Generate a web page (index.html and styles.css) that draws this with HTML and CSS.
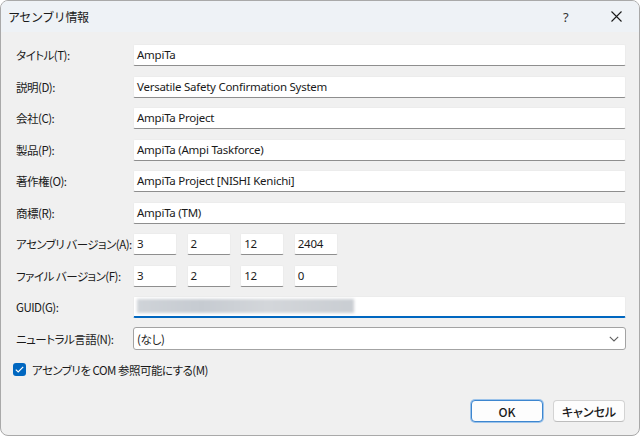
FILE: index.html
```html
<!DOCTYPE html>
<html lang="ja">
<head>
<meta charset="utf-8">
<title>アセンブリ情報</title>
<link rel="stylesheet" href="styles.css">
</head>
<body>
<div class="window">
  <div class="titlebar">
    <span class="title">アセンブリ情報</span>
    <span class="help">?</span>
    <span class="close">
      <svg width="11" height="11" viewBox="0 0 11 11"><path d="M0.5 0.5 L10.5 10.5 M10.5 0.5 L0.5 10.5" stroke="#1a1a1a" stroke-width="1.1" fill="none"/></svg>
    </span>
  </div>
  <div class="content">
    <div class="form">
      <label class="lbl">タイトル(T):</label>
      <div class="input">AmpiTa</div>
      <label class="lbl">説明(D):</label>
      <div class="input">Versatile Safety Confirmation System</div>
      <label class="lbl">会社(C):</label>
      <div class="input">AmpiTa Project</div>
      <label class="lbl">製品(P):</label>
      <div class="input">AmpiTa (Ampi Taskforce)</div>
      <label class="lbl">著作権(O):</label>
      <div class="input">AmpiTa Project [NISHI Kenichi]</div>
      <label class="lbl">商標(R):</label>
      <div class="input">AmpiTa (TM)</div>
      <label class="lbl">アセンブリ バージョン(A):</label>
      <div class="versions">
        <div class="input small">3</div>
        <div class="input small">2</div>
        <div class="input small">12</div>
        <div class="input small">2404</div>
      </div>
      <label class="lbl">ファイル バージョン(F):</label>
      <div class="versions">
        <div class="input small">3</div>
        <div class="input small">2</div>
        <div class="input small">12</div>
        <div class="input small">0</div>
      </div>
      <label class="lbl">GUID(G):</label>
      <div class="input guid"><div class="blur"></div></div>
      <label class="lbl">ニュートラル言語(N):</label>
      <div class="combo">
        <span>(なし)</span>
        <svg class="chev" width="10" height="6" viewBox="0 0 10 6"><path d="M0.8 0.8 L5 5 L9.2 0.8" stroke="#606060" stroke-width="1.1" fill="none"/></svg>
      </div>
    </div>
    <div class="check-row">
      <span class="checkbox">
        <svg width="9" height="7" viewBox="0 0 9 7"><path d="M0.8 3.6 L3.2 6 L8.2 0.9" stroke="#ffffff" stroke-width="1.2" fill="none"/></svg>
      </span>
      <span class="check-label">アセンブリを COM 参照可能にする(M)</span>
    </div>
    <div class="buttons">
      <button class="btn default">OK</button>
      <button class="btn">キャンセル</button>
    </div>
  </div>
</div>
</body>
</html>
```

FILE: styles.css
```css
* { box-sizing: border-box; }
html, body {
  margin: 0;
  padding: 0;
  background: #ffffff;
}
body {
  font-family: "Noto Sans", "Noto Sans CJK JP", sans-serif;
  font-size: 12px;
  color: #1a1a1a;
}
.window {
  width: 640px;
  height: 436px;
  border: 1px solid #a9a9a9;
  border-radius: 8px;
  overflow: hidden;
  background: #f0f0f0;
  display: flex;
  flex-direction: column;
}
.titlebar {
  height: 31px;
  flex: none;
  background: #eef2f6;
  display: flex;
  align-items: center;
  padding-left: 7px;
  font-family: "Noto Sans CJK JP", sans-serif;
}
.title {
  flex: 1;
  font-size: 12px;
  color: #1a1a1a;
  letter-spacing: -0.4px;
}
.help {
  width: 12px;
  margin-right: 36px;
  font-family: "Noto Sans", sans-serif;
  font-size: 13px;
  color: #333;
}
.close {
  width: 11px;
  height: 11px;
  margin-right: 17px;
  display: flex;
}
.content {
  flex: 1;
  padding: 12px 13px 0 15px;
  display: flex;
  flex-direction: column;
}
.form {
  display: grid;
  grid-template-columns: 117px 1fr;
  grid-auto-rows: 22px;
  row-gap: 9.5px;
  align-items: center;
}
.lbl {
  font-family: "Noto Sans CJK JP", sans-serif;
  font-size: 11.5px;
  color: #1a1a1a;
  white-space: nowrap;
  font-feature-settings: "palt";
  letter-spacing: -0.5px;
}
.input {
  height: 22px;
  background: #ffffff;
  border: 1px solid #ececec;
  border-bottom: 1px solid #8e8e8e;
  border-radius: 2px;
  padding: 0 3px;
  line-height: 20px;
  font-family: "Noto Sans", "Noto Sans CJK JP", sans-serif;
  font-size: 11.5px;
  letter-spacing: -0.25px;
  white-space: nowrap;
  overflow: hidden;
}
.versions {
  display: flex;
  gap: 9.6px;
}
.input.small {
  width: 44px;
}
.input.guid {
  border-bottom: 2px solid #0067c0;
  padding: 2px 3px;
}
.blur {
  width: 217px;
  height: 14px;
  background: linear-gradient(90deg, #cfd3d8 0%, #c6cbd1 30%, #d3d6da 60%, #c9cdd2 100%);
  filter: blur(1.5px);
}
.combo {
  height: 23px;
  background: #ffffff;
  border: 1px solid #a3a3a3;
  border-radius: 3px;
  padding: 0 6px 0 3px;
  display: flex;
  align-items: center;
  justify-content: space-between;
  font-family: "Noto Sans CJK JP", sans-serif;
  font-size: 11.5px;
  font-feature-settings: "palt";
  letter-spacing: -0.3px;
}
.check-row {
  margin-top: 12px;
  margin-left: -3px;
  display: flex;
  align-items: center;
  gap: 6px;
}
.checkbox {
  width: 13px;
  height: 13px;
  border-radius: 3px;
  background: #0067c0;
  display: flex;
  align-items: center;
  justify-content: center;
}
.check-label {
  font-family: "Noto Sans CJK JP", sans-serif;
  font-size: 11.5px;
  font-feature-settings: "palt";
  letter-spacing: -0.5px;
}
.buttons {
  margin-top: auto;
  margin-bottom: 13px;
  margin-right: 1px;
  display: flex;
  justify-content: flex-end;
  gap: 10px;
}
.btn {
  width: 72px;
  height: 22px;
  background: #fdfdfd;
  border: 1px solid #d3d3d3;
  border-bottom-color: #bdbdbd;
  border-radius: 4px;
  font-family: "Noto Sans CJK JP", sans-serif;
  font-feature-settings: "palt";
  font-size: 12px;
  font-weight: 500;
  color: #1a1a1a;
  padding: 0;
}
.btn.default {
  border: 1px solid #3d86cf;
  box-shadow: 0 0 0 1px #9cc3ea;
}
```
